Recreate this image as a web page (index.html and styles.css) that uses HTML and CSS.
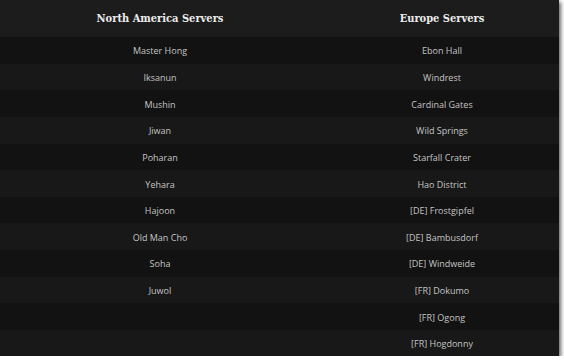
FILE: index.html
```html
<!DOCTYPE html>
<html>
<head>
<meta charset="utf-8">
<link rel="stylesheet" href="styles.css">
</head>
<body>
<div class="frame">
  <div class="table">
    <div class="head">North America Servers</div>
    <div class="head">Europe Servers</div>
    <div class="cell odd">Master Hong</div><div class="cell odd">Ebon Hall</div>
    <div class="cell even">Iksanun</div><div class="cell even">Windrest</div>
    <div class="cell odd">Mushin</div><div class="cell odd">Cardinal Gates</div>
    <div class="cell even">Jiwan</div><div class="cell even">Wild Springs</div>
    <div class="cell odd">Poharan</div><div class="cell odd">Starfall Crater</div>
    <div class="cell even">Yehara</div><div class="cell even">Hao District</div>
    <div class="cell odd">Hajoon</div><div class="cell odd">[DE] Frostgipfel</div>
    <div class="cell even">Old Man Cho</div><div class="cell even">[DE] Bambusdorf</div>
    <div class="cell odd">Soha</div><div class="cell odd">[DE] Windweide</div>
    <div class="cell even">Juwol</div><div class="cell even">[FR] Dokumo</div>
    <div class="cell odd"></div><div class="cell odd">[FR] Ogong</div>
    <div class="cell even"></div><div class="cell even">[FR] Hogdonny</div>
  </div>
</div>
</body>
</html>
```
FILE: styles.css
```css
html, body {
  margin: 0;
  padding: 0;
  background: #ffffff;
}
.frame {
  width: 559px;
  height: 356px;
  overflow: hidden;
  background: #1b1b1b;
  box-shadow: 2px 2px 4px rgba(0, 0, 0, 0.6);
}
.table {
  display: grid;
  grid-template-columns: 320px 239px;
  grid-template-rows: 37px repeat(12, 26.65px);
}
.head {
  display: flex;
  align-items: center;
  justify-content: center;
  font-family: "DejaVu Serif Condensed", "DejaVu Serif", serif;
  font-weight: bold;
  font-size: 11px;
  color: #ececec;
  background: #1c1c1c;
}
.cell {
  display: flex;
  align-items: center;
  justify-content: center;
  padding-top: 1px;
  font-family: "Open Sans", sans-serif;
  font-size: 9px;
  color: #c4c4c4;
}
.table > :nth-child(2n) {
  padding-left: 5px;
}
.odd { background: #121212; }
.even { background: #181818; }
```
